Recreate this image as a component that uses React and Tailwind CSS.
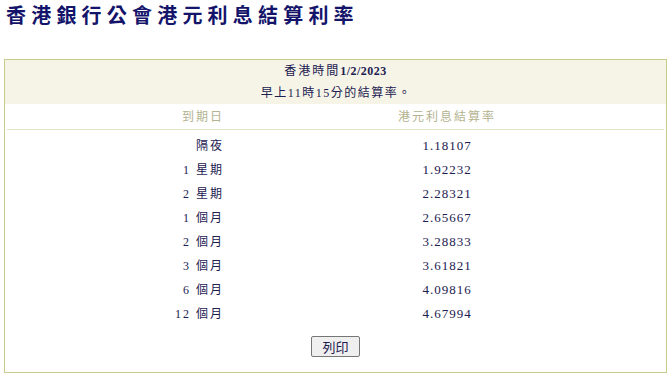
const rows = [
  { term: '隔夜', rate: '1.18107' },
  { term: '1 星期', rate: '1.92232' },
  { term: '2 星期', rate: '2.28321' },
  { term: '1 個月', rate: '2.65667' },
  { term: '2 個月', rate: '3.28833' },
  { term: '3 個月', rate: '3.61821' },
  { term: '6 個月', rate: '4.09816' },
  { term: '12 個月', rate: '4.67994' },
];

const serif = { fontFamily: '"Liberation Serif", "Noto Sans CJK TC", serif' };

export default function App() {
  return (
    <div className="w-[672px] h-[379px] bg-white overflow-hidden">
      <div
        className="pl-[6px] h-[30px] leading-[30px] text-[20px] font-bold tracking-[5.2px] text-[#14146b]"
        style={{ fontFamily: '"Noto Sans CJK TC", sans-serif' }}
      >
        香港銀行公會港元利息結算利率
      </div>

      <div className="ml-[4px] mt-[29px] w-[663px] border border-[#c8cc8a]" style={serif}>
        <div className="h-[44px] bg-[#f5f4e7] text-center text-[12px] text-[#1c2050]">
          <div className="leading-[22px] tracking-[2px]">
            香港時間<span className="font-bold tracking-[0.5px]">1/2/2023</span>
          </div>
          <div className="leading-[22px] tracking-[1.5px]">
            早上11時15分的結算率<span className="tracking-normal">。</span>
          </div>
        </div>

        <div className="mx-[2px] flex h-[26px] items-center border-b border-[#e4e4c8] text-[12px] tracking-[2px] text-[#b3b38f]">
          <div className="w-[223px] pr-[6px] text-right">到期日</div>
          <div className="flex-1 text-center">港元利息結算率</div>
        </div>

        <div className="mx-[2px] pt-[4px]">
          {rows.map((r) => (
            <div key={r.rate} className="flex h-[24px] items-center text-[12px] text-[#1c2050]">
              <div className="w-[223px] pr-[6px] text-right tracking-[2px]">{r.term}</div>
              <div className="flex-1 text-center text-[13px] tracking-[1px]">{r.rate}</div>
            </div>
          ))}
        </div>

        <div className="flex justify-center pt-[10px] pb-[15px]">
          <button
            className="h-[21px] w-[49px] rounded-[2px] border border-[#767676] bg-[#efefef] text-[13px] text-[#1c2050]"
            style={{ fontFamily: '"Noto Sans CJK TC", sans-serif' }}
          >
            列印
          </button>
        </div>
      </div>
    </div>
  );
}
